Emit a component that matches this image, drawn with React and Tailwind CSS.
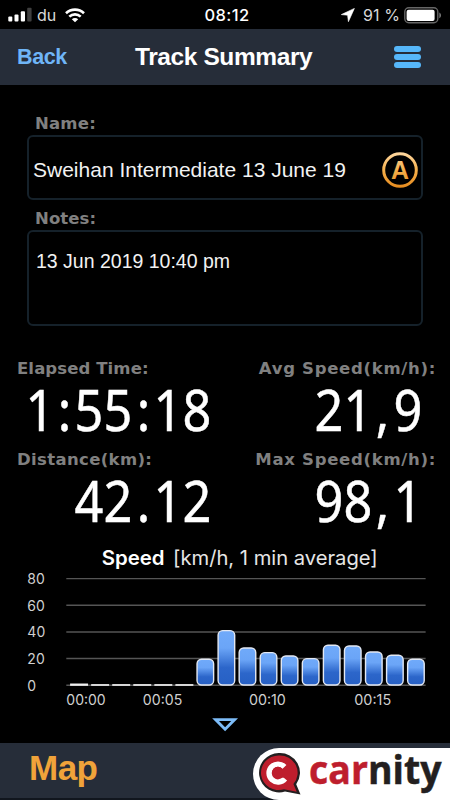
import React from "react";

const speeds = [0.6, 0, 0, 0, 0, 0, 20, 41.5, 28.5, 25, 22.5, 20.5, 30.5, 30, 25.5, 23, 20];

const gridLines = [80, 60, 40, 20, 0];

const timeLabels = [
  { text: "00:00", x: 66 },
  { text: "00:05", x: 142.7 },
  { text: "00:10", x: 249 },
  { text: "00:15", x: 354.5 }
];

// 20 km/h is 26.7px high, 0 km/h is at y=145.5
const yFor = value => 145.5 - value * 1.335;

function StatusBar() {
  return (
    <div className="h-[29px] flex items-center pl-2 pr-[8px] pt-[2px] text-white font-['Inter',sans-serif]">
      <div className="flex-1 flex items-center">
        <svg width="24" height="16" viewBox="0 0 24 16">
          <rect x="0.3" y="9.5" width="4" height="5" rx="1" fill="#fff" />
          <rect x="6.5" y="7.5" width="4" height="7" rx="1" fill="#fff" />
          <rect x="12.8" y="4.3" width="4.2" height="10.2" rx="1" fill="#fff" />
          <rect x="19.2" y="0.8" width="4.4" height="13.7" rx="1" fill="#3f3f3f" />
        </svg>
        <span className="ml-[5px] text-[16px] text-[#d8d8d8]">du</span>
        <svg className="ml-[9px]" width="20" height="15" viewBox="0 0 20 15" fill="none" stroke="#fff" strokeWidth="2.6">
          <path d="M1 5.2C6 0.4 14 0.4 19 5.2" />
          <path d="M4.3 8.6C7.5 5.6 12.5 5.6 15.7 8.6" />
          <path d="M10 14.2L6.8 11.2C8.5 9.6 11.5 9.6 13.2 11.2Z" fill="#fff" stroke="none" />
        </svg>
      </div>
      <div className="pl-[4px] text-[16.5px] font-medium tracking-[0.4px]">08:12</div>
      <div className="flex-1 flex items-center justify-end">
        <svg width="14" height="14" viewBox="0 0 14 14">
          <path d="M0.3 6.6L13.4 0.4L7.4 13.7L6.6 7.2Z" fill="#fff" stroke="#fff" strokeWidth="0.6" strokeLinejoin="round" />
        </svg>
        <span className="ml-[8px] text-[16px] text-[#d8d8d8] whitespace-nowrap tracking-[0.1px]">91 %</span>
        <svg className="ml-[4px]" width="38" height="17" viewBox="0 0 38 17">
          <rect x="0.8" y="0.8" width="33" height="15" rx="4" fill="none" stroke="#666" strokeWidth="1.4" />
          <rect x="2.6" y="2.7" width="28" height="11.4" rx="2" fill="#fff" />
          <path d="M35.3 5.5C37.6 6.6 37.6 10 35.3 11.2Z" fill="#777" />
        </svg>
      </div>
    </div>
  );
}

function Header() {
  return (
    <div className="h-14 bg-[#262d39] flex items-center px-[17px] font-['Liberation_Sans',sans-serif] font-bold">
      <div className="w-[118px] pt-[1px] text-[21.5px] tracking-[-0.4px] text-[#6fb5f7]">Back</div>
      <div className="flex-1 pt-[1px] text-[24.5px] text-white tracking-[-0.4px] whitespace-nowrap">Track Summary</div>
      <div className="pr-[12px]">
        <div className="w-[27px] flex flex-col gap-[2.5px]">
          <div className="h-[5.5px] rounded-full bg-[#56b7fa]" />
          <div className="h-[5.5px] rounded-full bg-[#56b7fa]" />
          <div className="h-[5.5px] rounded-full bg-[#56b7fa]" />
        </div>
      </div>
    </div>
  );
}

function Label({ children, tracking = "tracking-[0.1px]" }) {
  return (
    <div className={`h-5 leading-5 text-[16.5px] font-bold text-[#808080] whitespace-nowrap font-['DejaVu_Sans',sans-serif] ${tracking}`}>
      {children}
    </div>
  );
}

function AutoIcon() {
  return (
    <svg width="36" height="36" viewBox="0 0 36 36">
      <defs>
        <linearGradient id="orange" gradientUnits="userSpaceOnUse" x1="0" y1="0" x2="0" y2="36">
          <stop offset="0" stopColor="#ffd9a4" />
          <stop offset="0.5" stopColor="#f5b04c" />
          <stop offset="1" stopColor="#e68a1d" />
        </linearGradient>
      </defs>
      <circle cx="18" cy="18" r="16.3" fill="none" stroke="url(#orange)" strokeWidth="3" />
      <text x="18" y="26.8" textAnchor="middle" fontSize="26" fontWeight="bold" fontFamily="Liberation Sans, sans-serif" textLength="18" lengthAdjust="spacingAndGlyphs" fill="url(#orange)">A</text>
    </svg>
  );
}

// every digit takes the same width, separators take a narrower one
function BigNumber({ value }) {
  return (
    <div className="h-[52px] flex justify-end text-white text-[56px] leading-[52px] font-['Noto_Sans',sans-serif] [-webkit-text-stroke:0.5px_#fff]">
      {value.split("").map((char, i) => (
        <span key={i} className={/\d/.test(char) ? "w-[28.8px] flex justify-center" : "w-[20.8px] flex justify-center"}>
          <span className="scale-x-90">{char}</span>
        </span>
      ))}
    </div>
  );
}

function SpeedChart() {
  return (
    <svg className="block" width="450" height="204" viewBox="0 0 450 204" fontFamily="Inter, sans-serif">
      <defs>
        <linearGradient id="bar" x1="0" y1="0" x2="0" y2="1">
          <stop offset="0" stopColor="#70aafa" />
          <stop offset="0.32" stopColor="#6ba5f7" />
          <stop offset="0.68" stopColor="#2c66ca" />
          <stop offset="1" stopColor="#2760c4" />
        </linearGradient>
      </defs>
      <text x="101.5" y="25.5" fontSize="20" fontWeight="600" fill="#fff" textLength="63" lengthAdjust="spacingAndGlyphs">Speed</text>
      <text x="173" y="25.5" fontSize="20" fill="#e6e6e6" textLength="205" lengthAdjust="spacingAndGlyphs">[km/h, 1 min average]</text>
      {gridLines.map(value => (
        <g key={value}>
          <text x="27" y={yFor(value) + 5.5} fontSize="14" fill="#d0d0d0">{value}</text>
          <line x1="66" x2="426" y1={yFor(value)} y2={yFor(value)} stroke="#555" strokeWidth="1.5" />
        </g>
      ))}
      {speeds.map((speed, i) => {
        const x = 69.8 + i * 21.1;
        return speed < 1 ? (
          <rect key={i} x={x} y={144.4 - speed} width="18" height={1.7 + speed} fill="#f0f0f0" />
        ) : (
          <rect key={i} x={x + 0.6} y={yFor(speed) + 0.7} width="16.6" height={speed * 1.335 - 0.9} rx="4.5" fill="url(#bar)" stroke="#e3e8f2" strokeWidth="1.4" />
        );
      })}
      {timeLabels.map(label => (
        <text key={label.text} x={label.x} y="165" fontSize="14" fill="#d0d0d0" textLength={label.x > 200 ? 37 : 39.5} lengthAdjust="spacingAndGlyphs">{label.text}</text>
      ))}
      <path d="M215.5 179.9H234.7L225.1 189.6Z" fill="none" stroke="#7dbcf8" strokeWidth="2.8" />
    </svg>
  );
}

function CarnityLogo() {
  return (
    <svg className="block overflow-visible" width="197" height="52" viewBox="0 0 197 52">
      <path d="M26 0H197V52H26A26 26 0 0 1 26 0Z" fill="#fff" />
      <path d="M25.7 5A20 19.7 0 1 0 32 43.5L47.5 46.5L43.2 36.2A20 19.7 0 0 0 25.7 5Z" fill="#231f20" />
      <path d="M25.7 7.5A17.7 17.3 0 1 0 31 41.3L43.7 43.8L40.4 36A17.7 17.3 0 0 0 25.7 7.5Z" fill="#be1e2d" />
      <path d="M31.5 18.8A9 9 0 1 0 32 30.8" fill="none" stroke="#fff" strokeWidth="5.4" />
      <path d="M29.5 21.5A5.6 5.6 0 1 0 24 30L31.5 29.6L29.5 26.5Z" fill="#be1e2d" />
      <text x="56" y="36.3" fontSize="39.5" fontWeight="bold" fontFamily="Open Sans, sans-serif" textLength="132.5" lengthAdjust="spacingAndGlyphs" strokeWidth="0.5">
        <tspan fill="#be1e2d" stroke="#be1e2d">car</tspan><tspan fill="#231f20" stroke="#231f20">nity</tspan>
      </text>
    </svg>
  );
}

export default function App() {
  return (
    <div className="w-[450px] h-[800px] bg-black overflow-hidden flex flex-col">
      <StatusBar />
      <Header />
      <div className="px-[27px] pt-[29px] font-['Liberation_Sans',sans-serif] text-[#f2f2f2]">
        <div className="pl-[8px] h-[21px]"><Label tracking="tracking-[0.2px]">Name:</Label></div>
        <div className="h-[65px] border-2 border-[#15212a] rounded-md flex items-center justify-between pl-[4px] pr-[3px] pt-[5px]">
          <span className="text-[21px] whitespace-nowrap">Sweihan Intermediate 13 June 19</span>
          <AutoIcon />
        </div>
        <div className="pl-[8px] mt-[9px]"><Label>Notes:</Label></div>
        <div className="mt-[1px] h-[96px] border-2 border-[#15212a] rounded-md pl-[7px] pt-[17px] text-[19.5px] leading-6">
          13 Jun 2019 10:40 pm
        </div>
      </div>
      <div className="mt-[33px] h-[181px] flex justify-between pl-[17px] pr-[14px]">
        <div className="w-[194px]">
          <Label>Elapsed Time:</Label>
          <div className="mt-[4px]"><BigNumber value="1:55:18" /></div>
          <div className="mt-[15px]"><Label tracking="tracking-[0.35px]">Distance(km):</Label></div>
          <div className="mt-[4px]"><BigNumber value="42.12" /></div>
        </div>
        <div className="w-[190px] flex flex-col items-end">
          <Label tracking="tracking-[0.7px]">Avg Speed(km/h):</Label>
          <div className="mt-[4px] pr-[14px]"><BigNumber value="21,9" /></div>
          <div className="mt-[15px]"><Label tracking="tracking-[0.7px]">Max Speed(km/h):</Label></div>
          <div className="mt-[4px] pr-[14px]"><BigNumber value="98,1" /></div>
        </div>
      </div>
      <SpeedChart />
      <div className="h-[57px] flex justify-between items-end bg-[#262d39] border-b-2 border-[#11161e]">
        <div className="pl-[29px] pb-[10px] text-[35px] leading-[40px] font-bold text-[#f0a33a] tracking-[-0.5px] font-['Liberation_Sans',sans-serif]">Map</div>
        <div className="-mb-[2px]"><CarnityLogo /></div>
      </div>
    </div>
  );
}
